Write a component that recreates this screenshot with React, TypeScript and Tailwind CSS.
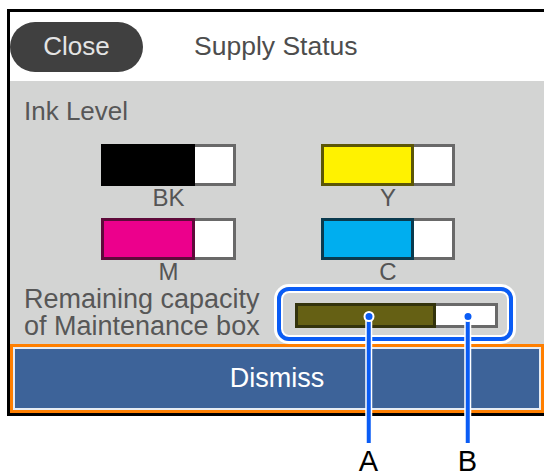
type Ink = {
  label: string;
  fill: string;
  edge: string;
  level: number;
};

const inks: Ink[] = [
  { label: "BK", fill: "bg-black", edge: "border-black", level: 94 },
  { label: "Y", fill: "bg-[#fff200]", edge: "border-[#5c5606]", level: 93 },
  { label: "M", fill: "bg-[#ec008c]", edge: "border-[#5e0a3a]", level: 94 },
  { label: "C", fill: "bg-[#00aeef]", edge: "border-[#0a3a4e]", level: 93 },
];

function InkBar({ ink }: { ink: Ink }) {
  return (
    <div className="flex flex-col items-center">
      <div className="flex h-[42px] w-full">
        <div
          className={`border-[3px] ${ink.edge} ${ink.fill}`}
          style={{ width: ink.level }}
        />
        <div className="flex-1 border-[3px] border-l-0 border-[#696969] bg-white" />
      </div>
      <span className="text-[24px] leading-[24px] text-[#555]">{ink.label}</span>
    </div>
  );
}

function Callout({ x, letter }: { x: number; letter: string }) {
  return (
    <>
      <div
        className="absolute top-[316px] h-[127px] w-[4.5px] -translate-x-1/2 bg-[#0a5cf5] shadow-[0_0_0_1.5px_#fff]"
        style={{ left: x }}
      />
      <div
        className="absolute top-[311px] h-[11px] w-[11px] -translate-x-1/2 rounded-full border-2 border-white bg-[#0a5cf5]"
        style={{ left: x }}
      />
      <span
        className="absolute top-[450px] -translate-x-1/2 text-[29px] leading-[22px] text-black"
        style={{ left: x }}>
        {letter}
      </span>
    </>
  );
}

export default function App() {
  return (
    <div className="relative h-[473px] w-[544px] overflow-hidden bg-white font-['Liberation_Sans',sans-serif]">
      <div className="ml-[7px] mt-[9px] w-[546px] border-[3px] border-black">
        {/* header */}
        <div className="flex h-[69px] items-center bg-white">
          <div className="flex h-[50px] w-[133px] items-center justify-center rounded-full bg-[#404040] text-[26px] text-[#e4e4e4]">
            Close
          </div>
          <span className="ml-[51px] text-[26.5px] text-[#4d4d4d]">Supply Status</span>
        </div>

        {/* body */}
        <div className="h-[263px] bg-[#d3d4d3] pl-[14px] pt-[16px] text-[#575757]">
          <div className="text-[26px] leading-[28px]">Ink Level</div>
          <div className="ml-[77px] mt-[19px] grid w-[354px] grid-cols-[135px_134px] gap-x-[85px] gap-y-[8px]">
            {inks.map((ink) => (
              <InkBar key={ink.label} ink={ink} />
            ))}
          </div>
          <div className="mt-[1.5px] flex items-start">
            <div className="w-[271px] text-[27px] leading-[27px]">
              Remaining capacity
              <br />
              of Maintenance box
            </div>
            <div className="mt-[17.5px] flex h-[25px] w-[203px]">
              <div className="w-[141px] border-[3px] border-[#33330c] bg-[#656014]" />
              <div className="flex-1 border-[3px] border-l-0 border-[#696969] bg-white" />
            </div>
          </div>
        </div>

        {/* dismiss */}
        <div className="h-[69px] w-[534px] border-[3px] border-[#ff7f00]">
          <div className="flex h-full items-center justify-center border-2 border-[#e6ecf4] bg-[#3d6399] text-[27px] text-white">
            Dismiss
          </div>
        </div>
      </div>

      {/* callout highlight */}
      <div className="absolute left-[277px] top-[287px] h-[54px] w-[236px] rounded-[12px] border-4 border-[#0a5cf5] shadow-[0_0_0_3px_#fff,inset_0_0_0_2px_#fff]" />
      <Callout x={368.5} letter="A" />
      <Callout x={467.5} letter="B" />
    </div>
  );
}
